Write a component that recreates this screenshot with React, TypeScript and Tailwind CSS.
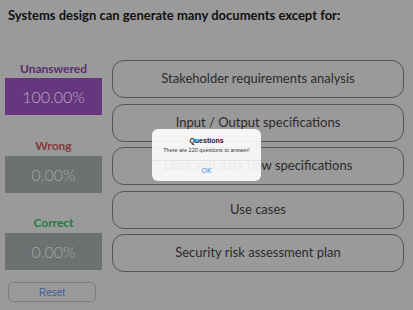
const answers = [
  "Stakeholder requirements analysis",
  "Input / Output specifications",
  "Data and data flow specifications",
  "Use cases",
  "Security risk assessment plan",
];

const stats = [
  { label: "Unanswered", value: "100.00%", labelColor: "text-[#5b2c6f]", box: "bg-[#66377f]", text: "text-[#b9a7c4]", gap: "mt-0 h-[18px]" },
  { label: "Wrong", value: "0.00%", labelColor: "text-[#863a3a]", box: "bg-[#6c7272]", text: "text-[#a2a7a7]", gap: "mt-[21px] h-[20px]" },
  { label: "Correct", value: "0.00%", labelColor: "text-[#1f7a45]", box: "bg-[#6c7272]", text: "text-[#a2a7a7]", gap: "mt-[20px] h-[20px]" },
];

export default function App() {
  return (
    <div
      className="relative w-[413px] h-[310px] overflow-hidden bg-[#9a9a9a]"
      style={{ fontFamily: "Lato, 'Open Sans', sans-serif" }}
    >
      {/* Question */}
      <div className="pl-[8px] pt-[6px] h-[25px] text-[13px] leading-[18px] font-bold text-[#111] whitespace-nowrap">
        Systems design can generate many documents except for:
      </div>

      <div className="flex mt-[35px]">
        {/* Score column */}
        <div className="ml-[5px] w-[97px] flex flex-col">
          {stats.map((s) => (
            <div key={s.label} className="flex flex-col">
              <div className={`${s.gap} flex items-center justify-center text-[12px] font-bold ${s.labelColor}`}>
                {s.label}
              </div>
              <div className={`h-[37px] ${s.box} flex items-center justify-center text-[16px] font-light ${s.text}`}>
                {s.value}
              </div>
            </div>
          ))}
          <button
            className="mt-[12px] ml-[3px] w-[88px] h-[20px] rounded-[5px] border border-[#7c7c7c] text-[10px] text-[#3f5d9c] flex items-center justify-center"
            style={{ fontFamily: "'Liberation Sans', Arial, sans-serif" }}
          >
            Reset
          </button>
        </div>

        {/* Answers */}
        <div className="ml-[10px] w-[292px] flex flex-col gap-[5.5px]">
          {answers.map((a) => (
            <div
              key={a}
              className="h-[38px] rounded-[12px] border-[1.5px] border-[#555] flex items-center justify-center text-[13px] text-[#2b2b2b]"
            >
              {a}
            </div>
          ))}
        </div>
      </div>

      {/* Alert */}
      <div
        className="absolute left-[152px] top-[129px] w-[109px] h-[52px] rounded-[6px] bg-white/90 flex flex-col items-center"
        style={{ fontFamily: "'Liberation Sans', Arial, sans-serif" }}
      >
        <div className="mt-[8px] text-[7px] leading-[8px] font-bold text-[#222]">Questions</div>
        <div className="mt-[2px] text-[5.5px] leading-[7px] text-[#333]">There are 220 questions to answer!</div>
        <div className="mt-[6px] w-full border-t border-[#e4e4e4]" />
        <div className="flex-1 flex items-center text-[7px] text-[#3e8ad0]">OK</div>
      </div>
    </div>
  );
}
